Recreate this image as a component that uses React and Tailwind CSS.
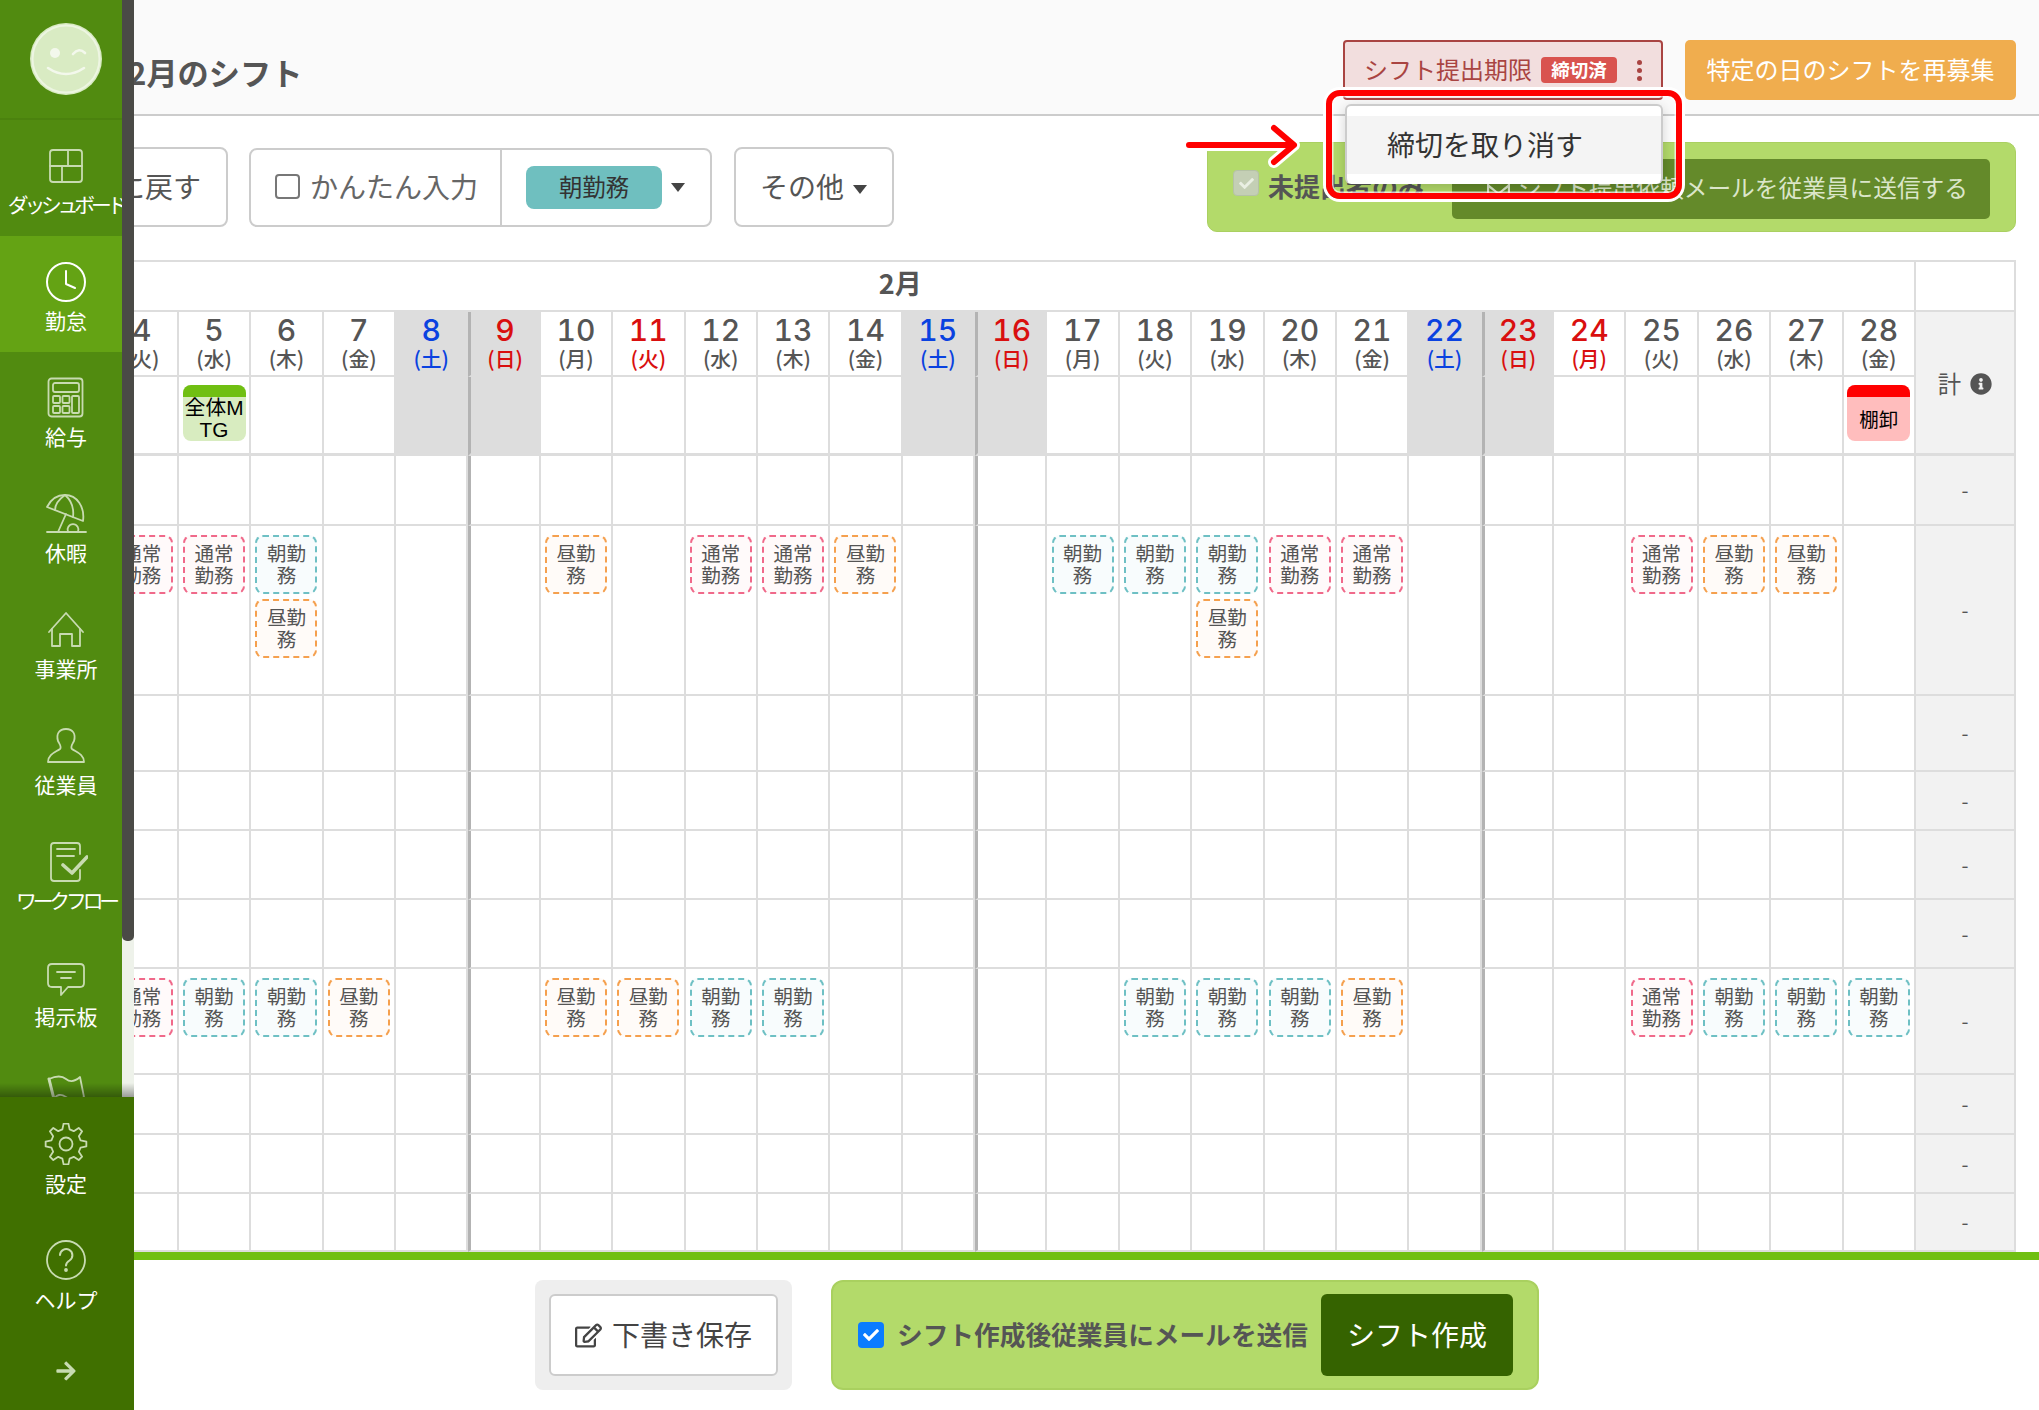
import React from "react";
import { FaArrowRight, FaInfoCircle, FaRegEdit, FaRegEnvelope, FaCheck } from "react-icons/fa";

const sw = "#c8dbb1";

function Ico({ w = 40, h = 42, children }) {
  return (
    <svg width={w} height={h} viewBox={`0 0 ${w} ${h}`} fill="none" stroke={sw} strokeWidth="1.8" strokeLinecap="round" strokeLinejoin="round">
      {children}
    </svg>
  );
}

const IconDash = () => (
  <Ico w={44}>
    <rect x="6" y="6" width="32" height="32" rx="3" />
    <path d="M6 22H38M24 6V22M18 22V38" />
  </Ico>
);
const IconClock = () => (
  <svg width="44" height="42" viewBox="0 0 44 42" fill="none" stroke="#fff" strokeWidth="2" strokeLinecap="round" strokeLinejoin="round">
    <circle cx="22" cy="22" r="19" />
    <path d="M22 11V24L31 28" />
  </svg>
);
const IconCalc = () => (
  <Ico w={44}>
    <rect x="4.5" y="2.5" width="34" height="38" rx="3" />
    <rect x="9" y="7" width="26" height="9" rx="2" />
    <rect x="9" y="20" width="7" height="7" rx="1" />
    <rect x="18.5" y="20" width="7" height="7" rx="1" />
    <rect x="9" y="30" width="7" height="7" rx="1" />
    <rect x="18.5" y="30" width="7" height="7" rx="1" />
    <rect x="28" y="20" width="7" height="17" rx="1" />
  </Ico>
);
const IconBeach = () => (
  <Ico w={44}>
    <path d="M3 15L39 29C41 15 33 3 21 3C12 3 6 9 3 15Z" />
    <path d="M21 3C14 8 11 13 11 18M21 3C28 9 30 17 29 25" />
    <path d="M22 22L14 40" />
    <path d="M24 40A5.5 5.5 0 1 1 34 40" />
    <path d="M3 40H42" />
  </Ico>
);
const IconHome = () => (
  <Ico w={44}>
    <path d="M5 24L22 5L39 24" />
    <path d="M8 21V38H16V26H28V38H36V21" />
  </Ico>
);
const IconUser = () => (
  <Ico w={44}>
    <path d="M4 38H40C40 30 32 28 28 25C26 23 28 21 30 17C32 10 29 5 22 5C15 5 12 10 14 17C16 21 18 23 16 25C12 28 4 30 4 38Z" />
  </Ico>
);
const IconFlow = () => (
  <Ico w={44}>
    <path d="M36 14V6Q36 3 33 3H10Q7 3 7 6V38Q7 41 10 41H33Q36 41 36 38V30" />
    <path d="M13 9H31M13 16H30" />
    <path d="M19 25L28 33L43 17" strokeWidth="3.6" />
  </Ico>
);
const IconBoard = () => (
  <Ico w={44}>
    <path d="M8 8H36Q40 8 40 12V27Q40 31 36 31H24L17 39V31H8Q4 31 4 27V12Q4 8 8 8Z" />
    <path d="M13 16H31M17 22H27" />
  </Ico>
);
const IconFlag = () => (
  <Ico w={44}>
    <path d="M5 7Q16 2 22 7T36 5L40 25Q30 30 22 25T10 27Z" />
    <path d="M5 7L10 27" strokeWidth="3" />
  </Ico>
);
function gearPath() {
  const cx = 22, cy = 21, n = 8, ro = 20.5, ri = 15;
  let d = "";
  for (let i = 0; i < n; i++) {
    const a = (i / n) * Math.PI * 2 - Math.PI / 2;
    const s = Math.PI / n;
    const pts = [
      [ri, a - s * 0.62],
      [ro, a - s * 0.3],
      [ro, a + s * 0.3],
      [ri, a + s * 0.62],
    ];
    pts.forEach(([r, t], j) => {
      d += `${i === 0 && j === 0 ? "M" : "L"}${(cx + r * Math.cos(t)).toFixed(2)} ${(cy + r * Math.sin(t)).toFixed(2)}`;
    });
  }
  return d + "Z";
}
const IconGear = () => (
  <Ico w={44}>
    <path d={gearPath()} />
    <circle cx="22" cy="21" r="6.5" />
  </Ico>
);
const IconHelp = () => (
  <Ico w={44}>
    <circle cx="22" cy="21" r="19" />
    <path d="M16 16A6.2 6.2 0 1 1 25.5 21.5C23.3 22.8 22 24 22 26.5" strokeWidth="2" />
    <circle cx="22" cy="31" r="1" fill={sw} />
  </Ico>
);

function NavItem({ icon, label, active, tight }) {
  return (
    <div className={`h-[116px] w-[132px] pt-6 flex flex-col items-center ${active ? "bg-[#64a314]" : ""}`}>
      <div className="h-[42px] flex items-center justify-center">{icon}</div>
      <div className={`mt-[5px] h-[26px] leading-[26px] text-white whitespace-nowrap ${tight ? "text-[20.8px] tracking-[-0.2em]" : "text-[21px]"}`}>{label}</div>
    </div>
  );
}

function Sidebar() {
  return (
    <aside className="w-[134px] shrink-0 h-[1410px] flex flex-col bg-[#eef2ea]">
      <div className="relative h-[1097px] overflow-hidden">
        <div className="w-[122px] h-full bg-[#518b10] overflow-hidden">
          <div className="h-[118px] flex items-center justify-center w-[132px] border-b-2 border-[#4b820e] box-content">
            <svg width="74" height="74" viewBox="0 0 74 74" fill="none">
              <circle cx="37" cy="37" r="36" fill="#d9ebc3" />
              <circle cx="37" cy="37" r="33.5" stroke="#edf5e2" strokeWidth="2" />
              <ellipse cx="26" cy="31" rx="5" ry="5" fill="#f3f8ec" />
              <path d="M44 32Q50 25 56 31" stroke="#f3f8ec" strokeWidth="2.6" strokeLinecap="round" />
              <path d="M19 46Q37 58 55 46" stroke="#f3f8ec" strokeWidth="2.6" strokeLinecap="round" />
            </svg>
          </div>
          <NavItem icon={<IconDash />} label="ダッシュボード" tight />
          <NavItem icon={<IconClock />} label="勤怠" active />
          <NavItem icon={<IconCalc />} label="給与" />
          <NavItem icon={<IconBeach />} label="休暇" />
          <NavItem icon={<IconHome />} label="事業所" />
          <NavItem icon={<IconUser />} label="従業員" />
          <NavItem icon={<IconFlow />} label="ワークフロー" tight />
          <NavItem icon={<IconBoard />} label="掲示板" />
          <NavItem icon={<IconFlag />} label="シフト" />
        </div>
        <div className="absolute top-0 right-0 w-3 h-[941px] bg-[#4a4a46] rounded-b-[5px]" />
        <div className="absolute bottom-0 left-0 right-0 h-[14px] bg-gradient-to-t from-black/35 to-transparent" />
      </div>
      <div className="flex-1 bg-[#407000] pt-[2px] flex flex-col">
        <NavItem icon={<IconGear />} label="設定" />
        <NavItem icon={<IconHelp />} label="ヘルプ" />
        <div className="flex-1 flex items-center justify-center w-[132px]">
          <FaArrowRight className="text-[#c8dbb1] text-[22px]" />
        </div>
      </div>
    </aside>
  );
}

const Caret = ({ className }) => (
  <span className={`inline-block w-0 h-0 border-l-[7.5px] border-r-[7.5px] border-t-[9px] border-l-transparent border-r-transparent border-t-[#444] ${className}`} />
);

function Header() {
  return (
    <header className="h-[116px] shrink-0 bg-[#fafafa] border-b-2 border-[#cccccc] flex items-start justify-between pt-10 pr-[23px]">
      <h1 className="ml-[-6px] mt-[2px] leading-[60px] text-[31.2px] font-bold text-[#555555] whitespace-nowrap">2月のシフト</h1>
      <div className="flex gap-[22px]">
        <div className="w-[320px] h-[60px] rounded-[4px] border-2 border-[#a94442] bg-[#f2dede] text-[#a94442] flex items-center pl-[19px]">
          <span className="text-[24px] whitespace-nowrap mt-[-2px]">シフト提出期限</span>
          <span className="ml-[9px] w-[76px] h-[26px] rounded-[4px] bg-[#d9534f] text-white text-[18.5px] font-bold flex items-center justify-center">締切済</span>
          <span className="ml-[20px] flex flex-col gap-[3px]">
            <i className="block w-[5px] h-[5px] rounded-full bg-[#a94442]" />
            <i className="block w-[5px] h-[5px] rounded-full bg-[#a94442]" />
            <i className="block w-[5px] h-[5px] rounded-full bg-[#a94442]" />
          </span>
        </div>
        <div className="w-[331px] h-[60px] rounded-[5px] bg-[#f0ad4e] text-white text-[24px] flex items-center justify-center whitespace-nowrap pb-[2px]">特定の日のシフトを再募集</div>
      </div>
    </header>
  );
}

function Toolbar() {
  return (
    <div className="h-[142px] shrink-0 flex items-center pr-[23px]">
      <div className="ml-[-68px] w-[162px] h-20 shrink-0 rounded-[8px] border-2 border-[#cccccc] flex items-center justify-end pr-[25px] pb-[2px] text-[28px] text-[#555555] whitespace-nowrap">元に戻す</div>
      <div className="ml-[21px] w-[463px] h-[79px] shrink-0 rounded-[8px] border-2 border-[#cccccc] flex items-stretch">
        <div className="w-[251px] border-r-2 border-[#cccccc] flex items-center pl-[24px]">
          <span className="w-[25px] h-[25px] rounded-[4px] border-2 border-[#777777] bg-white shrink-0 mt-[-2px]" />
          <span className="ml-[10px] text-[28px] text-[#666666] whitespace-nowrap mt-[-2px]">かんたん入力</span>
        </div>
        <div className="flex items-center pl-6">
          <span className="w-[136px] h-[43px] rounded-[8px] bg-[#6fbfbf] text-[#333333] text-[23.4px] flex items-center justify-center pb-[1px]">朝勤務</span>
          <Caret className="ml-[9px]" />
        </div>
      </div>
      <div className="ml-[22px] w-[160px] h-20 shrink-0 rounded-[8px] border-2 border-[#cccccc] flex items-center pl-[24px] text-[28px] text-[#555555] whitespace-nowrap">
        <span className="mt-[-2px]">その他</span><Caret className="ml-[9px] mt-[4px] border-l-[7px] border-r-[7px] border-t-[8px]" />
      </div>
      <div className="ml-auto w-[809px] h-[90px] shrink-0 rounded-[10px] bg-[#b3da6a] border border-[#aad061] flex items-center justify-between pl-[25px] pr-[25px]">
        <div className="flex items-center">
          <span className="w-[26px] h-[26px] rounded-[4px] bg-[#c4cfb5] border border-[#b5c2a5] flex items-center justify-center shrink-0 mt-[-8px]">
            <FaCheck className="text-[#e9efe2] text-[15px]" />
          </span>
          <span className="ml-[9px] text-[26px] font-bold text-[#555555] whitespace-nowrap mt-[-4px]">未提出者のみ</span>
        </div>
        <div className="mt-[4px] w-[538px] h-[60px] rounded-[5px] bg-[#648a2a] text-[#dbe6c9] flex items-center justify-end pr-[22px] text-[23.7px] whitespace-nowrap">
          <FaRegEnvelope className="mr-2 text-[23px]" /><span className="mt-[-2px]">シフト提出依頼メールを従業員に送信する</span>
        </div>
      </div>
    </div>
  );
}

const dow = (d) => ["金", "土", "日", "月", "火", "水", "木"][d % 7];
const days = Array.from({ length: 25 }, (_, i) => i + 4);
const isSat = (d) => d % 7 === 1;
const isSun = (d) => d % 7 === 2;

function numColor(d) {
  if (isSat(d)) return "text-[#0a42e0]";
  if (isSun(d) || d === 11 || d === 24) return "text-[#d90f0f]";
  return "text-[#555555]";
}

const styles = {
  通常: { label: "通常勤務", cls: "border-[#f0698a] bg-[#fffafa]" },
  朝: { label: "朝勤務", cls: "border-[#6ec0c4] bg-[#f8fcfd]" },
  昼: { label: "昼勤務", cls: "border-[#f5a04e] bg-[#fffbf8]" },
};

function Badge({ type }) {
  const s = styles[type];
  return (
    <div className={`w-[62px] h-[59px] rounded-[8px] border-[2.5px] border-dashed ${s.cls} flex items-center justify-center text-center px-1 pb-[2px] text-[19.5px] leading-[22px] text-[#555555]`}>
      {s.label}
    </div>
  );
}

function Cell({ d, children, bg = "" }) {
  const left = isSun(d) ? "border-l-[3px] border-l-[#b3b3b3]" : "";
  return (
    <div className={`relative box-border border-r-2 border-b-2 border-[#dddddd] ${left} ${bg} flex flex-col items-center`}>
      {children}
    </div>
  );
}

function Total() {
  return (
    <div className="box-border border-r-2 border-b-2 border-[#dddddd] bg-[#f2f2f2] flex items-center justify-center text-[#555555] text-[20px]">
      -
    </div>
  );
}

const rowA = {
  4: ["通常"], 5: ["通常"], 6: ["朝", "昼"], 10: ["昼"], 12: ["通常"], 13: ["通常"], 14: ["昼"],
  17: ["朝"], 18: ["朝"], 19: ["朝", "昼"], 20: ["通常"], 21: ["通常"], 25: ["通常"], 26: ["昼"], 27: ["昼"],
};
const rowB = {
  4: ["通常"], 5: ["朝"], 6: ["朝"], 7: ["昼"], 10: ["昼"], 11: ["昼"], 12: ["朝"], 13: ["朝"],
  18: ["朝"], 19: ["朝"], 20: ["朝"], 21: ["昼"], 25: ["通常"], 26: ["朝"], 27: ["朝"], 28: ["朝"],
};

function ShiftRow({ data = {} }) {
  return (
    <>
      {days.map((d) => (
        <Cell key={d} d={d}>
          {data[d] && (
            <div className="mt-[9px] flex flex-col gap-[5px]">
              {data[d].map((t) => <Badge key={t} type={t} />)}
            </div>
          )}
        </Cell>
      ))}
      <Total />
    </>
  );
}

function EventBox({ strip, body, text, children }) {
  return (
    <div className={`mt-2 w-[63px] h-[56px] rounded-[8px] overflow-hidden ${body} text-black flex flex-col`}>
      <div className={`h-3 shrink-0 ${strip}`} />
      <div className={`flex-1 flex items-center justify-center text-center leading-[22px] break-all ${text}`}>{children}</div>
    </div>
  );
}

function Schedule() {
  return (
    <div className="ml-[-27.5px] shrink-0 grid grid-cols-[repeat(25,72.375px)_100px] grid-rows-[52px_65px_79px_70px_170px_76px_59px_69px_69px_106px_60px_59px_58px]">
      <div className="col-[span_25] box-border border-t-2 border-r-2 border-b-2 border-[#dddddd] flex items-center justify-center pr-[220px] pb-[6px] text-[27px] font-bold text-[#555555]">2月</div>
      <div className="box-border border-t-2 border-r-2 border-b-2 border-[#dddddd]" />

      {days.map((d) => {
        const gray = isSat(d) || isSun(d);
        return (
          <Cell key={d} d={d} bg={gray ? "bg-[#dddddd]" : ""}>
            <div className={`mt-[3px] h-[31px] leading-[31px] text-[30px] font-medium tabular-nums font-['Inter',sans-serif] ${numColor(d)}`}>{d}</div>
            <div className={`h-[26px] leading-[25px] text-[20.8px] font-medium ${numColor(d)}`}>({dow(d)})</div>
          </Cell>
        );
      })}
      <div className="row-span-2 box-border border-r-2 border-b-[3px] border-[#dddddd] bg-[#f2f2f2] flex items-center justify-center gap-[9px] pt-[2px] text-[23.4px] text-[#555555]">
        計<FaInfoCircle className="text-[22px] text-[#555555]" />
      </div>

      {days.map((d) => {
        const gray = isSat(d) || isSun(d);
        const left = isSun(d) ? "border-l-[3px] border-l-[#b3b3b3]" : "";
        return (
          <div key={d} className={`box-border border-r-2 border-b-[3px] border-[#dddddd] ${left} ${gray ? "bg-[#dddddd]" : ""} flex flex-col items-center`}>
            {d === 5 && <EventBox strip="bg-[#70bf12]" body="bg-[#d8ecc0]" text="text-[20.8px] font-['Liberation_Sans','Noto_Sans_CJK_JP',sans-serif]">全体MTG</EventBox>}
            {d === 28 && <EventBox strip="bg-[#ff0000]" body="bg-[#ffbdbd]" text="text-[19.5px]">棚卸</EventBox>}
          </div>
        );
      })}

      <ShiftRow />
      <ShiftRow data={rowA} />
      <ShiftRow />
      <ShiftRow />
      <ShiftRow />
      <ShiftRow />
      <ShiftRow data={rowB} />
      <ShiftRow />
      <ShiftRow />
      <ShiftRow />
    </div>
  );
}

function Footer() {
  return (
    <div className="flex-1 border-t-8 border-[#70bf12] pt-5 pl-[401px] flex items-start">
      <div className="w-[257px] h-[110px] rounded-[8px] bg-[#eeeeee] flex items-center justify-center">
        <div className="w-[229px] h-[82px] rounded-[6px] border-[2.5px] border-[#cccccc] bg-white flex items-center justify-center gap-[10px] pb-[2px] text-[28px] text-[#444444] whitespace-nowrap">
          <FaRegEdit className="text-[27px] mt-[2px]" />下書き保存
        </div>
      </div>
      <div className="ml-[39px] w-[708px] h-[110px] rounded-[12px] bg-[#b3da6a] border-2 border-[#a9d05f] flex items-center pl-[25px]">
        <span className="w-[26px] h-[26px] rounded-[4px] bg-[#0a7cff] flex items-center justify-center shrink-0">
          <FaCheck className="text-white text-[16px]" />
        </span>
        <span className="ml-[13px] text-[25.7px] font-bold text-[#555555] whitespace-nowrap mt-[-2px]">シフト作成後従業員にメールを送信</span>
        <div className="ml-auto mr-[24px] w-[192px] h-[82px] rounded-[6px] bg-[#356300] text-white text-[28px] flex items-center justify-center whitespace-nowrap pb-[2px]">シフト作成</div>
      </div>
    </div>
  );
}

function Annotations() {
  return (
    <>
      {/* open dropdown */}
      <div className="absolute left-[1211px] top-[104px] w-[318px] h-[80px] rounded-[6px] border-2 border-b-0 border-[#cccccc] bg-white shadow-[0_4px_14px_rgba(0,0,0,0.18)] pt-[10px] pb-[10px]">
        <div className="h-[58px] bg-[#f4f4f4] flex items-center pl-[40px] pb-[2px] text-[28px] text-[#333333] whitespace-nowrap">締切を取り消す</div>
      </div>
      {/* red highlight */}
      <div className="absolute left-[1192px] top-[90px] w-[356px] h-[109px] rounded-[14px] border-[6.5px] border-[#ff0000] shadow-[0_0_0_3px_#ffffff,inset_0_0_0_1.5px_rgba(255,255,255,0.7)]" />
      {/* red arrow */}
      <svg className="absolute left-[1048px] top-[122px]" width="120" height="46" viewBox="0 0 120 46" fill="none" strokeLinecap="round" strokeLinejoin="round">
        <path d="M7 23H110M92 6L112 23L92 40" stroke="#ffffff" strokeWidth="12" />
        <path d="M7 23H110M92 6L112 23L92 40" stroke="#ff0000" strokeWidth="6" />
      </svg>
    </>
  );
}

export default function App() {
  return (
    <div className="w-full h-[1410px] flex overflow-hidden bg-white font-['Noto_Sans_CJK_JP','Noto_Sans',sans-serif]">
      <Sidebar />
      <main className="relative flex-1 min-w-0 h-full overflow-hidden flex flex-col">
        <Header />
        <Toolbar />
        <div className="h-[2px] shrink-0" />
        <Schedule />
        <Footer />
        <Annotations />
      </main>
    </div>
  );
}
